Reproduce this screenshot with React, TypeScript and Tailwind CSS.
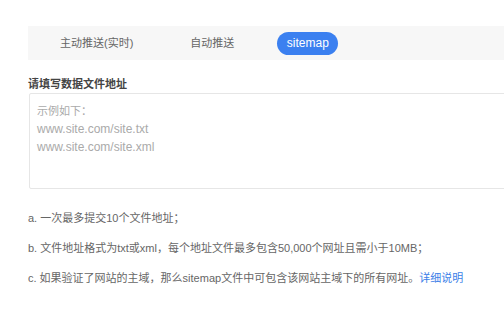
const font = { fontFamily: '"Liberation Sans", "Noto Sans CJK SC", sans-serif' };

export default function App() {
  return (
    <div className="w-[504px] h-[309px] bg-white overflow-hidden text-[#555]" style={font}>
      <div className="pt-[26px] pl-[28px]">
        {/* Tabs */}
        <div className="h-[34px] w-[520px] bg-[#f7f7f7] flex items-center text-[11px] text-[#666]">
          <span className="ml-[32px]">主动推送(实时)</span>
          <span className="ml-[57px]">自动推送</span>
          <span className="ml-[43px] h-[23px] w-[61px] rounded-full bg-[#3b80f0] text-white text-[12px] flex items-center justify-center">
            sitemap
          </span>
        </div>

        {/* Title */}
        <div className="mt-[16px] text-[11px] font-bold text-[#444] leading-[16px]">请填写数据文件地址</div>

        {/* Textarea */}
        <div className="mt-[1px] ml-px h-[96px] w-[520px] border border-[#e6e6e6] rounded-[2px] px-[7px] pt-[8px] text-[12px] leading-[18px] text-[#aaa]">
          <div className="text-[11px]">示例如下：</div>
          <div>www.site.com/site.txt</div>
          <div>www.site.com/site.xml</div>
        </div>

        {/* Notes */}
        <div className="mt-[21px] flex flex-col gap-[14px] text-[11px] leading-[16px] text-[#666]">
          <div>a. 一次最多提交10个文件地址；</div>
          <div>b. 文件地址格式为txt或xml，每个地址文件最多包含50,000个网址且需小于10MB；</div>
          <div>
            c. 如果验证了网站的主域，那么sitemap文件中可包含该网站主域下的所有网址。
            <span className="text-[#3b7ee8]">详细说明</span>
          </div>
        </div>
      </div>
    </div>
  );
}
